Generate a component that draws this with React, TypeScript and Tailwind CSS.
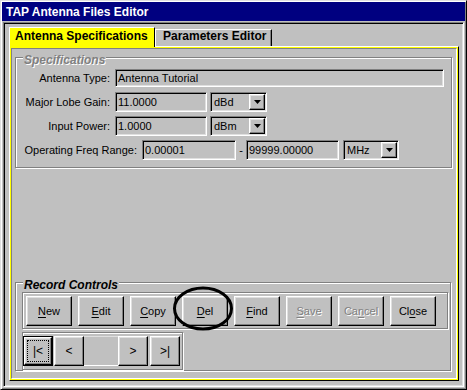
import React from "react";

// Win95-ish bevels
const raised =
  "border border-t-white border-l-white border-r-black border-b-black shadow-[inset_-1px_-1px_0_#808080,inset_1px_1px_0_#dfdfdf]";
const sunken =
  "border border-t-[#808080] border-l-[#808080] border-r-white border-b-white shadow-[inset_1px_1px_0_#000,inset_-1px_-1px_0_#dfdfdf]";
const etched = "border border-[#808080] shadow-[inset_1px_1px_0_#fff,1px_1px_0_#fff]";

function Field({ value, className = "" }: { value: string; className?: string }) {
  return (
    <div className={`${sunken} ${className} bg-[#c0c0c0] flex items-center pl-[2px] text-[11px] leading-none whitespace-nowrap overflow-hidden`}>
      {value}
    </div>
  );
}

function Combo({ value, className = "" }: { value: string; className?: string }) {
  return (
    <div className={`${sunken} ${className} h-[20px] flex items-center justify-between p-[1px]`}>
      <span className="pl-[2px] text-[11px] leading-none">{value}</span>
      <div className={`${raised} w-[16px] h-[16px] flex items-center justify-center`}>
        <svg width="7" height="4" viewBox="0 0 7 4">
          <path d="M0 0h7L3.5 4z" fill="#000" />
        </svg>
      </div>
    </div>
  );
}

function Btn({ label, u, disabled = false }: { label: string; u: number; disabled?: boolean }) {
  return (
    <div
      className={`w-[46px] h-[30px] ${raised} flex items-center justify-center text-[11px] leading-none ${
        disabled ? "text-[#808080] [text-shadow:1px_1px_0_#fff]" : "text-black"
      }`}
    >
      <span>
        {label.slice(0, u)}
        <span className="underline underline-offset-[2px]">{label[u]}</span>
        {label.slice(u + 1)}
      </span>
    </div>
  );
}

function Row({ label, labelW, children }: { label: string; labelW: string; children: React.ReactNode }) {
  return (
    <div className="flex items-center">
      <div className={`${labelW} text-right text-[11px] leading-none whitespace-nowrap`}>{label}</div>
      {children}
    </div>
  );
}

export default function App() {
  return (
    <div className="relative w-[467px] h-[390px] bg-[#c0c0c0] text-black [font-family:'Liberation_Sans',Arial,sans-serif] overflow-hidden">
      <div className="w-full h-full border border-t-[#dfdfdf] border-l-[#dfdfdf] border-r-black border-b-black shadow-[inset_1px_1px_0_#fff,inset_-1px_-1px_0_#808080] p-[1px] flex flex-col">
        {/* Title bar */}
        <div className="h-[19px] shrink-0 bg-[#000080] text-white font-bold text-[12px] flex items-center pl-[4px] leading-none">
          TAP Antenna Files Editor
        </div>

        {/* Client */}
        <div className={`mt-[1px] mx-[1px] h-[365px] shrink-0 ${sunken} pt-[4px] pl-[5px]`}>
          {/* Tabs */}
          <div className="flex items-start h-[19px] relative z-10">
            <div className="w-[146px] h-[20px] bg-[#ffff00] border-t border-l border-r border-t-white border-l-white border-r-black pl-[5px] pt-[2px] text-[12px] leading-[12px] font-bold whitespace-nowrap">
              Antenna Specifications
            </div>
            <div className="mt-[2px] w-[117px] h-[17px] border-t border-l border-r border-t-white border-l-white border-r-black shadow-[inset_-1px_0_0_#808080] pl-[7px] text-[12px] leading-[12px] font-bold whitespace-nowrap">
              Parameters Editor
            </div>
          </div>

          {/* Tab panel */}
          <div className="w-[450px] h-[335px] border border-t-white border-l-white border-r-black border-b-black">
            <div className="h-full border border-[#ffff00]">
              <div className="h-full border border-t-[#808080] border-l-[#808080] border-r-white border-b-white">
                {/* Specifications */}
                <div className={`relative ml-[3px] mt-[8px] w-[437px] h-[111px] ${etched}`}>
                  <div className="absolute left-[7px] top-[-4px] px-[1px] bg-[#c0c0c0] text-[12px] leading-[12px] font-bold italic text-[#808080] [text-shadow:1px_1px_0_#fff]">
                    Specifications
                  </div>
                  <div className="mt-[11px]">
                    <Row label="Antenna Type:" labelW="w-[94px]">
                      <Field value="Antenna Tutorial" className="ml-[5px] w-[329px] h-[18px]" />
                    </Row>
                  </div>
                  <div className="mt-[5px]">
                    <Row label="Major Lobe Gain:" labelW="w-[94px]">
                      <Field value="11.0000" className="ml-[5px] w-[92px] h-[20px]" />
                      <Combo value="dBd" className="ml-[3px] w-[57px]" />
                    </Row>
                  </div>
                  <div className="mt-[4px]">
                    <Row label="Input Power:" labelW="w-[94px]">
                      <Field value="1.0000" className="ml-[5px] w-[92px] h-[20px]" />
                      <Combo value="dBm" className="ml-[3px] w-[57px]" />
                    </Row>
                  </div>
                  <div className="mt-[4px]">
                    <Row label="Operating Freq Range:" labelW="w-[121px]">
                      <Field value="0.00001" className="ml-[5px] w-[94px] h-[20px]" />
                      <div className="w-[10px] text-center text-[11px] leading-none">-</div>
                      <Field value="99999.00000" className="w-[93px] h-[20px]" />
                      <Combo value="MHz" className="ml-[4px] w-[56px]" />
                    </Row>
                  </div>
                </div>

                {/* Record Controls */}
                <div className={`relative ml-[3px] mt-[114px] w-[436px] h-[89px] ${etched}`}>
                  <div className="absolute left-[7px] top-[-4px] px-[1px] bg-[#c0c0c0] text-[12px] leading-[12px] font-bold italic text-black">
                    Record Controls
                  </div>
                  <div className={`ml-[6px] mt-[9px] w-[426px] h-[37px] ${etched} pl-[3px] pt-[3px] flex gap-[6px]`}>
                    <Btn label="New" u={0} />
                    <Btn label="Edit" u={0} />
                    <Btn label="Copy" u={0} />
                    <Btn label="Del" u={0} />
                    <Btn label="Find" u={0} />
                    <Btn label="Save" u={0} disabled />
                    <Btn label="Cancel" u={2} disabled />
                    <Btn label="Close" u={2} />
                  </div>
                  <div className={`ml-[6px] mt-[3px] w-[161px] h-[38px] ${etched} pt-[3px] flex`}>
                    <div className="w-[30px] h-[30px] border border-black">
                      <div className={`w-full h-full ${raised} p-[2px]`}>
                        <div className="w-full h-full border border-dotted border-black flex items-center justify-center text-[12px] leading-none">
                          |&lt;
                        </div>
                      </div>
                    </div>
                    <div className={`ml-[1px] w-[30px] h-[30px] ${raised} flex items-center justify-center text-[12px] leading-none`}>
                      &lt;
                    </div>
                    <div className="w-[34px] h-[30px] border-t border-b border-t-[#dfdfdf] border-b-white" />
                    <div className={`w-[30px] h-[30px] ${raised} flex items-center justify-center text-[12px] leading-none`}>
                      &gt;
                    </div>
                    <div className={`ml-[2px] w-[30px] h-[30px] ${raised} flex items-center justify-center text-[12px] leading-none`}>
                      &gt;|
                    </div>
                  </div>
                </div>
              </div>
            </div>
          </div>
        </div>
      </div>

      {/* hand-drawn circle around Del */}
      <svg className="absolute left-[172px] top-[286px] pointer-events-none" width="62" height="46" viewBox="0 0 62 46">
        <ellipse cx="31" cy="22.5" rx="28.5" ry="20.5" fill="none" stroke="#000" strokeWidth="3" />
      </svg>
    </div>
  );
}
